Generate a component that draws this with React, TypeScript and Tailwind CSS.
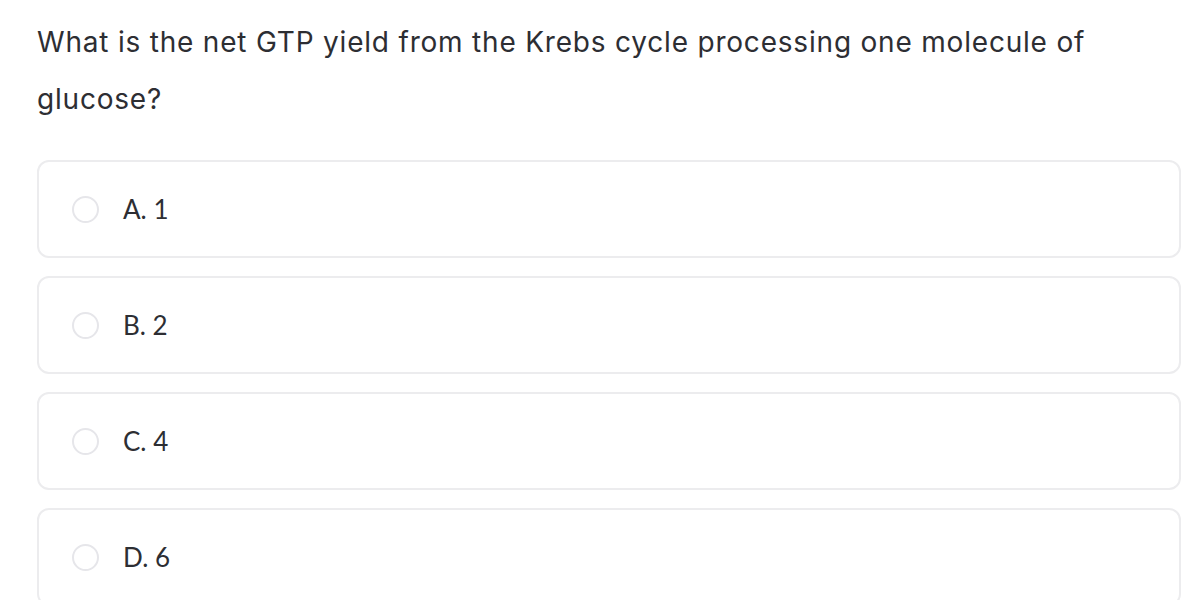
import React from "react";

const options = ["A. 1", "B. 2", "C. 4", "D. 6"];

export default function App() {
  return (
    <div className="w-[1184px] h-[600px] overflow-hidden bg-white text-[#2d2e33]" style={{ fontFamily: "Lato, 'Open Sans', sans-serif" }}>
      <div className="pl-[37px] pr-[3px] pt-[14px]">
        <p className="text-[28px] leading-[57px] tracking-[0.8px] max-w-[1070px]" style={{ fontFamily: "Inter, 'Open Sans', sans-serif" }}>
          What is the net GTP yield from the Krebs cycle processing one molecule of glucose?
        </p>
        <div className="mt-[32px] flex flex-col gap-[18px]">
          {options.map((o) => (
            <div key={o} className="h-[98px] rounded-[12px] border-2 border-[#ececee] flex items-center pl-[33px]">
              <span className="w-[27px] h-[27px] rounded-full border-2 border-[#e6e6ea] shrink-0" />
              <span className="ml-[24px] text-[26px]">{o}</span>
            </div>
          ))}
        </div>
      </div>
    </div>
  );
}
